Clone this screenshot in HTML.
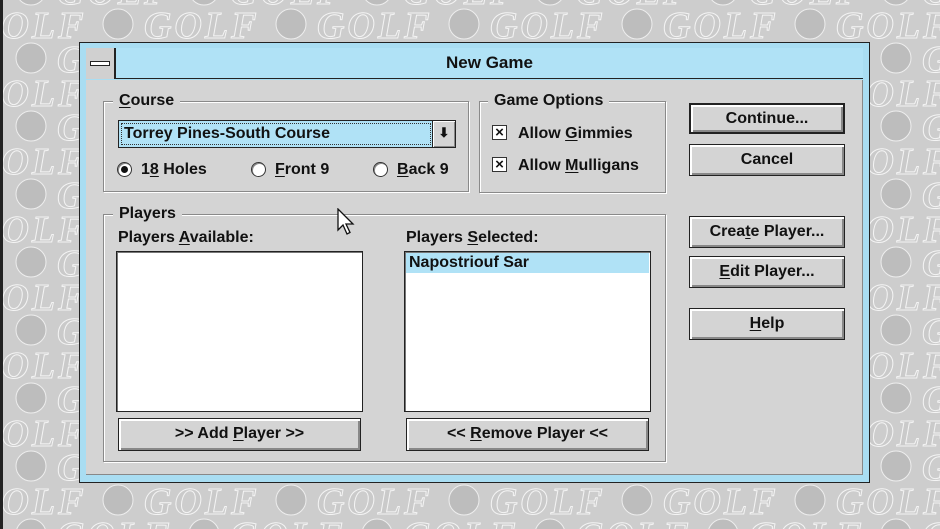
<!DOCTYPE html>
<html><head><meta charset="utf-8">
<style>
*{box-sizing:border-box;margin:0;padding:0}
body{width:940px;height:529px;overflow:hidden;position:relative;background:#cdcdcd;font-family:"Liberation Sans",Arial,sans-serif;font-weight:bold;font-size:16px;color:#111}
.abs{position:absolute}
#bg{position:absolute;left:0;top:0}
.win{left:79px;top:42px;width:791px;height:441px;border:1px solid #222;background:#a9ddf2}
.title{left:86px;top:48px;width:777px;height:31px;background:#b0e2f6;border-bottom:1px solid #222}
.sys{left:86px;top:48px;width:30px;height:31px;background:#d0d0d0;border-right:2px solid #222}
.sys i{position:absolute;left:4px;top:13px;width:20px;height:5px;border:1px solid #222;background:#fff}
.ttl{left:116px;top:53px;width:747px;text-align:center;font-size:17px}
.body{left:86px;top:80px;width:777px;height:395px;background:#d4d4d4;border-bottom:1px solid #888;border-right:1px solid #888}
.grp{border:1px solid #8a8a8a;box-shadow:inset 1px 1px 0 #fff,1px 1px 0 #fff}
.lbl{background:#d4d4d4;padding:0 6px;line-height:18px}
u{text-decoration:underline;text-underline-offset:2px}
.btn{border:1px solid #222;background:#d4d4d4;box-shadow:inset 1px 1px 0 #fff,inset 2px 2px 0 #fff,inset -1px -1px 0 #888,inset -2px -2px 0 #888;text-align:center;line-height:29px}
.list{background:#fff;border:1px solid #222;box-shadow:inset 1px 1px 0 #777}
.radio{width:15px;height:15px;border-radius:50%;background:#fff;border:1px solid #333;box-shadow:inset 1px 1px 0 #888}
.chk{width:15px;height:15px;background:#fff;border:1px solid #333;font-size:15px;line-height:13px;text-align:center}
</style></head><body>
<svg id="bg" width="940" height="529">
<defs>
<pattern id="p" x="-55" y="6" width="173" height="68" patternUnits="userSpaceOnUse">
<g font-family="Liberation Serif,serif" font-style="italic" font-weight="bold" font-size="38" fill="#cacaca" stroke="#f4f4f4" stroke-width="1">
<circle cx="173" cy="18" r="15" fill="#bdbdbd" stroke="#eee"/>
<circle cx="0" cy="18" r="15" fill="#bdbdbd" stroke="#eee"/>
<text x="26" y="32" letter-spacing="3">GOLF</text>
<circle cx="86" cy="52" r="15" fill="#bdbdbd" stroke="#eee"/>
<text x="112" y="66" letter-spacing="3">GOLF</text>
<text x="-61" y="66" letter-spacing="3">GOLF</text>
</g>
</pattern>
</defs>
<rect width="940" height="529" fill="#cdcdcd"/>
<rect width="940" height="529" fill="url(#p)"/>
<rect x="0" y="0" width="3" height="529" fill="#222"/>
</svg>

<div class="abs win"></div>
<div class="abs title"></div>
<div class="abs sys"><i></i></div>
<div class="abs ttl">New Game</div>
<div class="abs body"></div>

<div class="abs grp" style="left:103px;top:101px;width:366px;height:91px"></div>
<div class="abs lbl" style="left:113px;top:92px"><u>C</u>ourse</div>
<div class="abs" style="left:118px;top:120px;width:338px;height:28px;border:1px solid #222;background:#b0e2f6"></div>
<div class="abs" style="left:121px;top:123px;width:310px;height:22px;border:1px dotted #333;line-height:20px;padding-left:2px">Torrey Pines-South Course</div>
<div class="abs" style="left:432px;top:121px;width:23px;height:26px;background:#d4d4d4;border-left:1px solid #222;box-shadow:inset 1px 1px 0 #fff,inset -1px -1px 0 #888;text-align:center;font-size:13px;line-height:24px">&#x2B07;</div>
<div class="abs radio" style="left:117px;top:162px"><div style="position:absolute;left:3px;top:3px;width:7px;height:7px;border-radius:50%;background:#111"></div></div>
<div class="abs" style="left:141px;top:161px">1<u>8</u> Holes</div>
<div class="abs radio" style="left:251px;top:162px"></div>
<div class="abs" style="left:275px;top:161px"><u>F</u>ront 9</div>
<div class="abs radio" style="left:373px;top:162px"></div>
<div class="abs" style="left:397px;top:161px"><u>B</u>ack 9</div>

<div class="abs grp" style="left:479px;top:101px;width:187px;height:92px"></div>
<div class="abs lbl" style="left:488px;top:92px">Game Options</div>
<div class="abs chk" style="left:492px;top:125px">×</div>
<div class="abs" style="left:518px;top:125px">Allow <u>G</u>immies</div>
<div class="abs chk" style="left:492px;top:157px">×</div>
<div class="abs" style="left:518px;top:157px">Allow <u>M</u>ulligans</div>

<div class="abs btn" style="left:689px;top:103px;width:156px;height:31px;border-width:2px;line-height:27px">Continue...</div>
<div class="abs btn" style="left:689px;top:144px;width:156px;height:32px">Cancel</div>
<div class="abs btn" style="left:689px;top:216px;width:156px;height:32px">Crea<u>t</u>e Player...</div>
<div class="abs btn" style="left:689px;top:256px;width:156px;height:32px"><u>E</u>dit Player...</div>
<div class="abs btn" style="left:689px;top:308px;width:156px;height:32px"><u>H</u>elp</div>

<div class="abs grp" style="left:103px;top:214px;width:563px;height:248px"></div>
<div class="abs lbl" style="left:113px;top:205px">Players</div>
<div class="abs" style="left:118px;top:229px">Players <u>A</u>vailable:</div>
<div class="abs" style="left:406px;top:229px">Players <u>S</u>elected:</div>
<div class="abs list" style="left:116px;top:251px;width:247px;height:161px"></div>
<div class="abs list" style="left:404px;top:251px;width:247px;height:161px"></div>
<div class="abs" style="left:406px;top:253px;width:243px;height:20px;background:#b0e2f6;line-height:20px;padding-left:3px">Napostriouf Sar</div>
<div class="abs btn" style="left:118px;top:418px;width:243px;height:33px">&gt;&gt; Add <u>P</u>layer &gt;&gt;</div>
<div class="abs btn" style="left:406px;top:418px;width:243px;height:33px">&lt;&lt; <u>R</u>emove Player &lt;&lt;</div>

<svg class="abs" style="left:337px;top:208px" width="20" height="28" viewBox="0 0 20 28"><path d="M1 1 L1 22 L6 17 L10 26 L13 24.5 L9 16 L16 16 Z" fill="#fff" stroke="#111" stroke-width="1.3"/></svg>
</body></html>
